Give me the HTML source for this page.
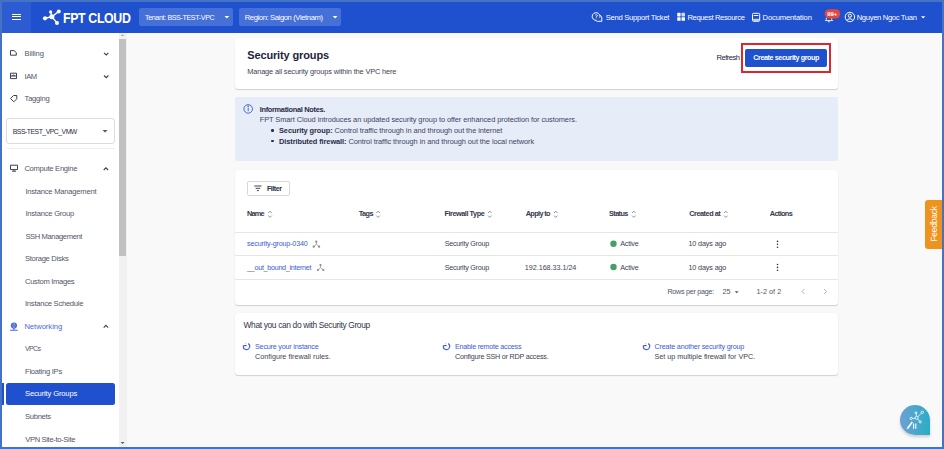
<!DOCTYPE html>
<html><head><meta charset="utf-8">
<style>
*{box-sizing:border-box;margin:0;padding:0}
html,body{width:944px;height:449px;overflow:hidden}
body{position:relative;background:#4472c4;font-family:"Liberation Sans",sans-serif}
.a{position:absolute}
.t{position:absolute;white-space:nowrap;line-height:1}
.card{position:absolute;background:#fff;border-radius:3px;box-shadow:0 1px 1px rgba(0,0,0,.16),0 0 1px rgba(0,0,0,.08)}
svg{position:absolute;overflow:visible}
</style></head><body>
<div class="a" style="left:2px;top:2px;width:940px;height:445px;background:#f9f9f9"></div>
<!-- header -->
<div class="a" style="left:2px;top:2px;width:940px;height:31px;background:#1f50cd"></div>
<div class="a" style="left:2px;top:2px;width:29.4px;height:31px;background:#2c5bd2"></div>
<div class="a" style="left:12px;top:13.6px;width:9.4px;height:1.2px;background:#fff"></div>
<div class="a" style="left:12px;top:16.3px;width:9.4px;height:1.2px;background:#fff"></div>
<div class="a" style="left:12px;top:19px;width:9.4px;height:1.2px;background:#fff"></div>
<svg style="left:0;top:0" width="70" height="32">
 <g stroke="#fff" stroke-width="1.4" fill="none"><line x1="45" y1="18.3" x2="51.9" y2="16.7"/><line x1="51.9" y1="16.7" x2="50.6" y2="11.9"/><line x1="51.9" y1="16.7" x2="58.8" y2="11.4"/><line x1="51.9" y1="16.7" x2="57" y2="22.9"/></g>
 <g fill="#fff"><circle cx="45" cy="18.3" r="2.1"/><circle cx="51.9" cy="16.7" r="2.5"/><circle cx="50.6" cy="11.9" r="1.6"/><circle cx="58.8" cy="11.4" r="2"/><circle cx="57" cy="22.9" r="2"/></g>
</svg>
<div class="a" style="left:139px;top:8px;width:93.5px;height:18.2px;background:#4570d8;border-radius:2px"></div>
<svg style="left:0;top:0" width="1" height="1"><path d="M224.5 15.9 L229.3 15.9 L226.9 18.4 Z" fill="#fff"/></svg>
<div class="a" style="left:239px;top:8px;width:101.7px;height:18.2px;background:#4570d8;border-radius:2px"></div>
<svg style="left:0;top:0" width="1" height="1"><path d="M332.7 15.9 L337.5 15.9 L335.1 18.4 Z" fill="#fff"/></svg>
<!-- header right icons -->
<svg style="left:0;top:0" width="1" height="1" fill="none" stroke="#fff" stroke-width="1">
 <path d="M596.2 20.3 a3.9 3.8 0 1 1 3.6-2.6"/>
 <path d="M595.6 20.2 q0.6 1.2 2 1.1 h4.2 v-3.6 a3 3 0 0 0-1.6-2.4"/>
 <path d="M595.3 15.3 a1.2 1.2 0 0 1 2.2 0.4 l-1.3 1.3 v0.6" stroke-width="0.9"/>
 <circle cx="596.2" cy="18.6" r="0.35" fill="#fff" stroke="none"/>
</svg>
<svg style="left:0;top:0" width="1" height="1" fill="#fff">
 <rect x="677.2" y="12.8" width="3.4" height="3.6" rx="0.6"/><rect x="681.5" y="12.8" width="3.5" height="3.6" rx="0.6" opacity="0.8"/>
 <rect x="677.2" y="17.2" width="3.4" height="3.6" rx="0.6"/><rect x="681.5" y="17.2" width="3.5" height="3.6" rx="0.6"/>
</svg>
<svg style="left:0;top:0" width="1" height="1" fill="none" stroke="#fff" stroke-width="1">
 <rect x="752.5" y="13.3" width="7.2" height="8" rx="1"/>
 <rect x="753.8" y="15" width="4.6" height="1" fill="#fff" stroke="none"/>
 <rect x="753.2" y="18.8" width="6" height="2" fill="#fff" stroke="none" opacity="0.75"/>
 <circle cx="849.9" cy="17" r="4.7"/>
 <circle cx="849.9" cy="15.7" r="1.6"/>
 <path d="M846.9 20.6 a3.2 2.8 0 0 1 6 0"/>
</svg>
<svg style="left:0;top:0" width="1" height="1"><path d="M825.3 20.6 h7.4 l-1-1.1 v-1.8 M826.3 17.7 v1.8 l-1 1.1" fill="none" stroke="#fff" stroke-width="0.9"/><circle cx="828.9" cy="21.7" r="0.7" fill="#fff"/><rect x="824.7" y="9.2" width="15.6" height="9.3" rx="4.65" fill="#e5473f"/><path d="M921 16.2 L925.3 16.2 L923.15 18.4 Z" fill="#fff"/></svg>
<div class="t" style="left:827.3px;top:11px;font-size:6px;font-weight:bold;color:#fff;letter-spacing:-0.1px">99+</div>

<!-- sidebar -->
<div class="a" style="left:2px;top:33px;width:116.5px;height:414px;background:#fff"></div>
<div class="a" style="left:118.5px;top:33px;width:8px;height:414px;background:#f1f1f1"></div>
<div class="a" style="left:119.4px;top:39px;width:6.6px;height:217px;background:#c1c1c1"></div>
<svg style="left:0;top:0" width="1" height="1"><path d="M121 35.9 L124.3 35.9 L122.65 34.2 Z" fill="#a3a3a3"/><path d="M120.8 442 L124.4 442 L122.6 444 Z" fill="#505050"/></svg>
<div class="a" style="left:6.2px;top:117.8px;width:108.4px;height:26.5px;border:1px solid #dcdcdc;border-radius:3px"></div>
<svg style="left:0;top:0" width="1" height="1"><path d="M102.5 130 L107.5 130 L105 132.5 Z" fill="#555"/></svg>
<div class="a" style="left:6.2px;top:148px;width:108.4px;height:1px;background:#eeeeee"></div>
<div class="a" style="left:6px;top:382.7px;width:108.6px;height:22.4px;background:#1f50cd;border-radius:2.5px"></div>
<div class="a" style="left:2px;top:382.8px;width:1.7px;height:22.2px;background:#1f50cd"></div>
<svg style="left:0;top:0" width="1" height="1" fill="none" stroke="#3b3f55" stroke-width="1">
 <path d="M10.5 50.6 h3.5 l2.3 2 v2.6 h-5.8z"/>
 <path d="M10.5 73.2 h6 v5.4 h-6z M10.5 76 h6 M12.5 76 a1 1 0 0 1 2 0"/>
 <path d="M10.5 98.5 l3-3 h3.3 v3.3 l-3 3z"/>
 <path d="M10.5 165.2 h7 v4.4 h-7z M14 169.6 v1.2 M12 171.2 h4"/>
 <path d="M104 52.8 l2.2 2.2 l2.2-2.2 M104 75.5 l2.2 2.2 l2.2-2.2 M103.7 170 l2.2-2.2 l2.2 2.2 M103.7 327.6 l2.2-2.2 l2.2 2.2" stroke="#3b3f55" stroke-width="1.1"/>
</svg>
<svg style="left:0;top:0" width="1" height="1" fill="none" stroke="#4a66d8" stroke-width="1.1">
 <circle cx="13.9" cy="325.6" r="3.1" fill="#4a66d8" stroke="none"/><ellipse cx="13.9" cy="325.6" rx="1" ry="2.4" stroke="#a8b8ee" stroke-width="0.6"/><path d="M13.9 328.5 v1.6 M10.1 330.2 h7.6"/>
</svg>

<!-- main cards -->
<div class="card" style="left:235px;top:38px;width:603px;height:51px"></div>
<div class="a" style="left:741.3px;top:43.3px;width:89.8px;height:29.3px;border:2px solid #e2252b"></div>
<div class="a" style="left:745.3px;top:48.5px;width:81.6px;height:18px;background:#1f50cd;border-radius:2px"></div>
<div class="a" style="left:235px;top:97.2px;width:603px;height:63.6px;background:#e6ecf8;border-radius:2px"></div>
<svg style="left:0;top:0" width="1" height="1" fill="none" stroke="#4a6ad8" stroke-width="1"><circle cx="248.2" cy="108.9" r="4.3"/><path d="M248.2 107.9 v3.3"/><circle cx="248.2" cy="106.3" r="0.5" fill="#4a6ad8"/></svg>
<div class="a" style="left:271.3px;top:129.2px;width:2.4px;height:2.4px;border-radius:1.2px;background:#2a2d45"></div>
<div class="a" style="left:271.3px;top:140px;width:2.4px;height:2.4px;border-radius:1.2px;background:#2a2d45"></div>

<div class="card" style="left:235px;top:169.5px;width:603px;height:135.5px"></div>
<div class="a" style="left:247.1px;top:181.2px;width:42.7px;height:15.3px;border:1px solid #d8d8d8;border-radius:2px"></div>
<svg style="left:0;top:0" width="1" height="1" stroke="#444" stroke-width="1"><path d="M254.3 186 h7.2 M255.6 188.3 h4.6 M256.9 190.6 h2"/></svg>
<div class="a" style="left:235px;top:232px;width:603px;height:1px;background:#e6e6e6"></div>
<div class="a" style="left:235px;top:255.2px;width:603px;height:1px;background:#e6e6e6"></div>
<div class="a" style="left:235px;top:278.8px;width:603px;height:1px;background:#e6e6e6"></div>
<svg style="left:0;top:0" width="1" height="1" fill="none" stroke="#777" stroke-width="0.8">
 <path d="M268.2 213 l1.8-1.8 l1.8 1.8 M268.2 215.6 l1.8 1.8 l1.8-1.8"/>
 <path d="M376.3 213 l1.8-1.8 l1.8 1.8 M376.3 215.6 l1.8 1.8 l1.8-1.8"/>
 <path d="M488 213 l1.8-1.8 l1.8 1.8 M488 215.6 l1.8 1.8 l1.8-1.8"/>
 <path d="M554 213 l1.8-1.8 l1.8 1.8 M554 215.6 l1.8 1.8 l1.8-1.8"/>
 <path d="M632 213 l1.8-1.8 l1.8 1.8 M632 215.6 l1.8 1.8 l1.8-1.8"/>
 <path d="M724 213 l1.8-1.8 l1.8 1.8 M724 215.6 l1.8 1.8 l1.8-1.8"/>
</svg>
<svg style="left:0;top:0" width="1" height="1" fill="#8a8a8a" stroke="#8a8a8a" stroke-width="0.7">
 <path d="M316.3 241.7 V244.3 L313.7 246.7 M316.3 244.3 L319.1 246.7" fill="none"/>
 <circle cx="316.3" cy="241.7" r="1.1" stroke="none"/><circle cx="313.7" cy="246.7" r="1.1" stroke="none"/><circle cx="319.1" cy="246.7" r="1.1" stroke="none"/>
 <path d="M320.5 265 V267.6 L317.9 270 M320.5 267.6 L323.3 270" fill="none"/>
 <circle cx="320.5" cy="265" r="1.1" stroke="none"/><circle cx="317.9" cy="270" r="1.1" stroke="none"/><circle cx="323.3" cy="270" r="1.1" stroke="none"/>
</svg>
<svg style="left:0;top:0" width="1" height="1" fill="#43a066"><circle cx="613.5" cy="243.7" r="3.2"/><circle cx="613.5" cy="267" r="3.2"/></svg>
<svg style="left:0;top:0" width="1" height="1" fill="#333"><circle cx="777.5" cy="241.4" r="0.8"/><circle cx="777.5" cy="244.3" r="0.8"/><circle cx="777.5" cy="247.2" r="0.8"/><circle cx="777.5" cy="264.5" r="0.8"/><circle cx="777.5" cy="267.4" r="0.8"/><circle cx="777.5" cy="270.3" r="0.8"/></svg>
<svg style="left:0;top:0" width="1" height="1"><path d="M734.8 291.2 h3.8 l-1.9 2z" fill="#555"/><path d="M804.5 289 l-2.5 2.5 l2.5 2.5 M824 289 l2.5 2.5 l-2.5 2.5" fill="none" stroke="#aaa" stroke-width="0.9"/></svg>

<div class="card" style="left:235px;top:312.7px;width:603px;height:62.3px"></div>
<svg style="left:0;top:0" width="1" height="1" fill="none" stroke="#4a62d4" stroke-width="1.15"><path d="M248.10 343.60 A3.2 3.2 0 1 1 243.35 345.80 M243.30 345.60 h3.4"/><circle cx="245.50" cy="343.20" r="0.4" fill="#4a62d4" stroke="none"/><path d="M448.10 343.60 A3.2 3.2 0 1 1 443.35 345.80 M443.30 345.60 h3.4"/><circle cx="445.50" cy="343.20" r="0.4" fill="#4a62d4" stroke="none"/><path d="M648.10 343.60 A3.2 3.2 0 1 1 643.35 345.80 M643.30 345.60 h3.4"/><circle cx="645.50" cy="343.20" r="0.4" fill="#4a62d4" stroke="none"/></svg>

<!-- feedback & AI -->
<div class="a" style="left:924.9px;top:199.7px;width:17.1px;height:49.6px;background:#f0921e;border-radius:3px 0 0 3px"></div>
<div class="t" style="left:934px;top:224.3px;font-size:8.5px;font-weight:normal;color:#fff;transform:translate(-50%,-50%) rotate(-90deg);transform-origin:center;letter-spacing:-0.25px">Feedback</div>
<div class="a" style="left:900px;top:404.8px;width:30.1px;height:30.1px;border-radius:50% 50% 0 50%;background:linear-gradient(90deg,#6ea0d2,#2badc6);box-shadow:0 2px 3px rgba(0,0,0,.18)"></div>
<svg style="left:0;top:0" width="1" height="1" fill="none" stroke="#fff" stroke-width="0.8">
 <circle cx="916.7" cy="417.8" r="1.5"/><circle cx="911.2" cy="418.4" r="1.1"/><circle cx="916" cy="412.8" r="1"/><circle cx="922.3" cy="412.3" r="1.2"/><circle cx="920.2" cy="421.9" r="1.1"/>
 <path d="M912.3 418.3 h2.9 M916.3 413.8 v2.5 M917.8 416.7 l3.6-3.5 M917.8 418.9 l1.6 2.1"/>
 <path d="M907.3 428.8 l5-6.8" stroke-width="1.6"/><path d="M913.6 428.8 v-5.3 M915.8 428.8 v-5.3" stroke-width="1.1"/>
</svg>
<div class="t" style="left:145.00px;top:15.00px;font-size:7.1px;font-weight:400;color:#fff;letter-spacing:-0.358px">Tenant: BSS-TEST-VPC</div>
<div class="t" style="left:244.70px;top:14.00px;font-size:7.6px;font-weight:400;color:#fff;letter-spacing:-0.37px">Region: Saigon (Vietnam)</div>
<div class="t" style="left:605.70px;top:14.00px;font-size:7.6px;font-weight:400;color:#fff;letter-spacing:-0.255px">Send Support Ticket</div>
<div class="t" style="left:687.40px;top:14.00px;font-size:7.6px;font-weight:400;color:#fff;letter-spacing:-0.361px">Request Resource</div>
<div class="t" style="left:762.60px;top:14.00px;font-size:7.6px;font-weight:400;color:#fff;letter-spacing:-0.15px">Documentation</div>
<div class="t" style="left:856.70px;top:14.00px;font-size:7.6px;font-weight:400;color:#fff;letter-spacing:-0.32px">Nguyen Ngoc Tuan</div>
<div class="t" style="left:62.92px;top:11.00px;font-size:14px;font-weight:700;color:#fff;letter-spacing:-0.4px;transform:scaleX(0.882);transform-origin:0 0">FPT CLOUD</div>
<div class="t" style="left:24.60px;top:50.00px;font-size:7.6px;font-weight:400;color:#525669;letter-spacing:-0.167px">Billing</div>
<div class="t" style="left:24.60px;top:73.00px;font-size:7.6px;font-weight:400;color:#525669;letter-spacing:-0.5px">IAM</div>
<div class="t" style="left:24.60px;top:95.00px;font-size:7.6px;font-weight:400;color:#525669;letter-spacing:-0.251px">Tagging</div>
<div class="t" style="left:12.80px;top:129.00px;font-size:6.9px;font-weight:400;color:#2b2f45;letter-spacing:-0.52px">BSS-TEST_VPC_VMW</div>
<div class="t" style="left:24.40px;top:165.00px;font-size:7.6px;font-weight:400;color:#525669;letter-spacing:-0.276px">Compute Engine</div>
<div class="t" style="left:25.40px;top:188.00px;font-size:7.6px;font-weight:400;color:#525669;letter-spacing:-0.222px">Instance Management</div>
<div class="t" style="left:25.40px;top:210.00px;font-size:7.6px;font-weight:400;color:#525669;letter-spacing:-0.231px">Instance Group</div>
<div class="t" style="left:25.40px;top:233.00px;font-size:7.6px;font-weight:400;color:#525669;letter-spacing:-0.385px">SSH Management</div>
<div class="t" style="left:25.00px;top:255.00px;font-size:7.6px;font-weight:400;color:#525669;letter-spacing:-0.292px">Storage Disks</div>
<div class="t" style="left:25.00px;top:278.00px;font-size:7.6px;font-weight:400;color:#525669;letter-spacing:-0.292px">Custom Images</div>
<div class="t" style="left:25.00px;top:300.00px;font-size:7.6px;font-weight:400;color:#525669;letter-spacing:-0.25px">Instance Schedule</div>
<div class="t" style="left:24.40px;top:323.00px;font-size:7.6px;font-weight:400;color:#4d66d6;letter-spacing:-0.012px">Networking</div>
<div class="t" style="left:25.00px;top:345.00px;font-size:7.0px;font-weight:400;color:#525669;letter-spacing:-0.667px">VPCs</div>
<div class="t" style="left:25.00px;top:368.00px;font-size:7.6px;font-weight:400;color:#525669;letter-spacing:-0.263px">Floating IPs</div>
<div class="t" style="left:25.00px;top:390.00px;font-size:7.6px;font-weight:400;color:#fff;letter-spacing:-0.157px">Security Groups</div>
<div class="t" style="left:25.00px;top:413.00px;font-size:7.6px;font-weight:400;color:#525669;letter-spacing:-0.283px">Subnets</div>
<div class="t" style="left:25.20px;top:436.00px;font-size:7.6px;font-weight:400;color:#525669;letter-spacing:-0.34px">VPN Site-to-Site</div>
<div class="t" style="left:247.20px;top:50.00px;font-size:11px;font-weight:700;color:#1c1f3b;letter-spacing:-0.128px">Security groups</div>
<div class="t" style="left:247.20px;top:68.00px;font-size:7.4px;font-weight:400;color:#3c3f52;letter-spacing:-0.143px">Manage all security groups within the VPC here</div>
<div class="t" style="left:716.60px;top:54.00px;font-size:7.6px;font-weight:400;color:#23263a;letter-spacing:-0.517px">Refresh</div>
<div class="t" style="left:753.20px;top:54.00px;font-size:7.2px;font-weight:700;color:#fff;letter-spacing:-0.4px">Create security group</div>
<div class="t" style="left:259.70px;top:106.00px;font-size:7.4px;font-weight:700;color:#2a2d45;letter-spacing:-0.306px">Informational Notes.</div>
<div class="t" style="left:259.70px;top:116.00px;font-size:7.4px;font-weight:400;color:#3f4461;letter-spacing:-0.065px">FPT Smart Cloud introduces an updated security group to offer enhanced protection for customers.</div>
<div class="t" style="left:279.00px;top:127.00px;font-size:7.4px;font-weight:400;color:#3f4461;letter-spacing:-0.071px"><b style="color:#2a2d45">Security group:</b> Control traffic through in and through out the internet</div>
<div class="t" style="left:279.00px;top:138.00px;font-size:7.4px;font-weight:400;color:#3f4461;letter-spacing:-0.074px"><b style="color:#2a2d45">Distributed firewall:</b> Control traffic through in and through out the local network</div>
<div class="t" style="left:266.90px;top:185.00px;font-size:7.0px;font-weight:700;color:#2a2d45;letter-spacing:-0.4px">Filter</div>
<div class="t" style="left:247.10px;top:210.00px;font-size:7.3px;font-weight:700;color:#35384c;letter-spacing:-0.833px">Name</div>
<div class="t" style="left:358.80px;top:210.00px;font-size:7.3px;font-weight:700;color:#35384c;letter-spacing:-0.601px">Tags</div>
<div class="t" style="left:444.50px;top:210.00px;font-size:7.3px;font-weight:700;color:#35384c;letter-spacing:-0.458px">Firewall Type</div>
<div class="t" style="left:525.70px;top:210.00px;font-size:7.3px;font-weight:700;color:#35384c;letter-spacing:-0.614px">Apply to</div>
<div class="t" style="left:609.10px;top:210.00px;font-size:7.3px;font-weight:700;color:#35384c;letter-spacing:-0.62px">Status</div>
<div class="t" style="left:689.30px;top:210.00px;font-size:7.3px;font-weight:700;color:#35384c;letter-spacing:-0.478px">Created at</div>
<div class="t" style="left:769.80px;top:210.00px;font-size:7.3px;font-weight:700;color:#35384c;letter-spacing:-0.633px">Actions</div>
<div class="t" style="left:247.10px;top:240.00px;font-size:7.2px;font-weight:400;color:#3d5bd6;letter-spacing:-0.178px">security-group-0340</div>
<div class="t" style="left:444.70px;top:240.00px;font-size:7.2px;font-weight:400;color:#3c3f52;letter-spacing:-0.269px">Security Group</div>
<div class="t" style="left:620.30px;top:240.00px;font-size:7.2px;font-weight:400;color:#3c3f52;letter-spacing:-0.24px">Active</div>
<div class="t" style="left:688.50px;top:240.00px;font-size:7.2px;font-weight:400;color:#3c3f52;letter-spacing:-0.13px">10 days ago</div>
<div class="t" style="left:247.10px;top:264.00px;font-size:7.2px;font-weight:400;color:#3d5bd6;letter-spacing:-0.296px">__out_bound_internet</div>
<div class="t" style="left:444.70px;top:264.00px;font-size:7.2px;font-weight:400;color:#3c3f52;letter-spacing:-0.269px">Security Group</div>
<div class="t" style="left:524.80px;top:264.00px;font-size:7.2px;font-weight:400;color:#3c3f52;letter-spacing:-0.029px">192.168.33.1/24</div>
<div class="t" style="left:620.30px;top:264.00px;font-size:7.2px;font-weight:400;color:#3c3f52;letter-spacing:-0.24px">Active</div>
<div class="t" style="left:688.50px;top:264.00px;font-size:7.2px;font-weight:400;color:#3c3f52;letter-spacing:-0.13px">10 days ago</div>
<div class="t" style="left:667.40px;top:288.00px;font-size:7.2px;font-weight:400;color:#50546a;letter-spacing:-0.269px">Rows per page:</div>
<div class="t" style="left:722.60px;top:288.00px;font-size:7.2px;font-weight:400;color:#50546a;letter-spacing:-0.2px">25</div>
<div class="t" style="left:756.60px;top:288.00px;font-size:7.2px;font-weight:400;color:#50546a;letter-spacing:0.028px">1-2 of 2</div>
<div class="t" style="left:243.50px;top:321.00px;font-size:8.4px;font-weight:400;color:#30334a;letter-spacing:-0.341px">What you can do with Security Group</div>
<div class="t" style="left:255.00px;top:343.00px;font-size:7.2px;font-weight:400;color:#3d5bd6;letter-spacing:-0.2px">Secure your instance</div>
<div class="t" style="left:255.00px;top:353.00px;font-size:7.2px;font-weight:400;color:#3c3f52;letter-spacing:0.024px">Configure firewall rules.</div>
<div class="t" style="left:455.00px;top:343.00px;font-size:7.2px;font-weight:400;color:#3d5bd6;letter-spacing:-0.243px">Enable remote access</div>
<div class="t" style="left:455.00px;top:353.00px;font-size:7.2px;font-weight:400;color:#3c3f52;letter-spacing:-0.222px">Configure SSH or RDP access.</div>
<div class="t" style="left:654.60px;top:343.00px;font-size:7.2px;font-weight:400;color:#3d5bd6;letter-spacing:-0.19px">Create another security group</div>
<div class="t" style="left:654.60px;top:353.00px;font-size:7.2px;font-weight:400;color:#3c3f52;letter-spacing:-0.016px">Set up multiple firewall for VPC.</div>
</body></html>
